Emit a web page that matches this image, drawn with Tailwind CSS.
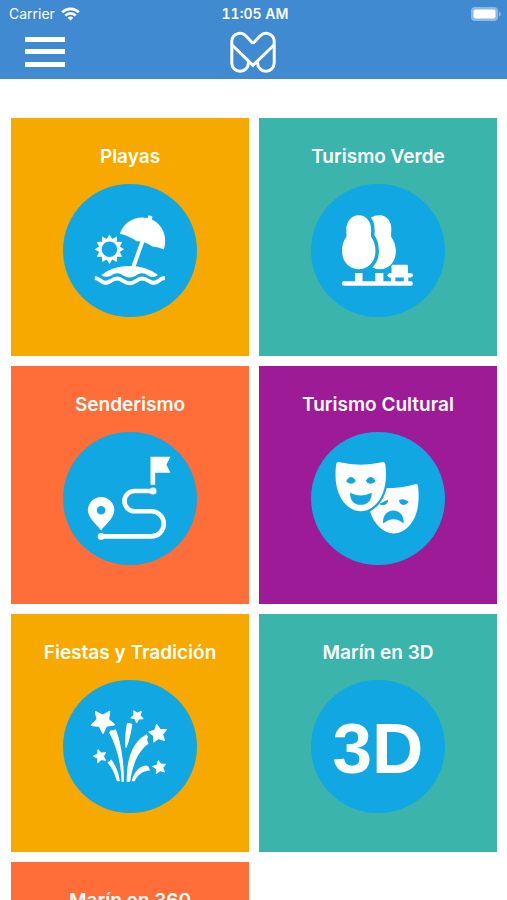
<!DOCTYPE html>
<html lang="es">
<head>
<meta charset="utf-8">
<meta name="viewport" content="width=device-width, initial-scale=1">
<title>Marín Turismo</title>
<script src="https://cdn.jsdelivr.net/npm/@tailwindcss/browser@4"></script>
</head>
<body class="flex h-screen flex-col overflow-hidden bg-white font-['Inter','Liberation_Sans',sans-serif] text-white">

<header class="shrink-0 bg-[#3f8ad0] pb-1.5">
  <div class="grid h-7 grid-cols-3 items-center pr-1.5 pl-[9px] text-sm leading-5">
    <div class="flex items-center gap-1.5">
      <span>Carrier</span>
      <svg class="h-3.5 w-[19px]" viewBox="0 0 19 14" fill="none" stroke="#fff" stroke-width="2.7" aria-label="Wi-Fi">
        <path d="M1.2 5.2A11.8 11.8 0 0 1 17.8 5.2"/>
        <path d="M4.3 8.6A7.4 7.4 0 0 1 14.7 8.6"/>
        <path d="M9.5 13.6L6.8 10.9A3.8 3.8 0 0 1 12.2 10.9Z" fill="#fff" stroke="none"/>
      </svg>
    </div>
    <span class="text-center font-semibold tabular-nums">11:05 AM</span>
    <svg class="h-3.5 w-[30px] justify-self-end" viewBox="0 0 30 14" aria-label="Batería">
      <rect x="0" y="0" width="27" height="14" rx="4" fill="#fff" opacity=".4"/>
      <rect x="2.5" y="2.5" width="22" height="9" rx="2" fill="#fff"/>
      <path d="M28 4.5Q30 5.5 30 7T28 9.5Z" fill="#fff" opacity=".4"/>
    </svg>
  </div>
  <div class="grid h-[45px] grid-cols-3 items-center px-[25px]">
    <button type="button" aria-label="Menú" class="mt-0.5 flex h-8 w-10 flex-col justify-between py-px">
      <span class="h-[5px] w-full bg-white"></span>
      <span class="h-[5px] w-full bg-white"></span>
      <span class="h-[5px] w-full bg-white"></span>
    </button>
    <svg class="mt-0.5 h-[42px] w-[46px] justify-self-center" viewBox="0 0 46 42" fill="none" stroke="#fff" stroke-width="3" aria-label="Marín">
      <path d="M23 12.5L15.8 4.8A8.2 8.2 0 0 0 1.8 10V32A8.3 8.3 0 0 0 18.4 32V30.5M23 12.5L30.2 4.8A8.2 8.2 0 0 1 44.2 10V32A8.3 8.3 0 0 1 27.6 32V30.5"/>
      <path d="M2 14L23 34.3L44 14"/>
    </svg>
  </div>
</header>

<main class="min-h-0 flex-1 overflow-y-auto pt-[39px] pr-2.5 pb-2.5 pl-[11px] [scrollbar-width:none]">
  <nav class="grid grid-cols-2 gap-2.5 text-center text-[19px] leading-6 font-semibold">

    <a href="#playas" class="flex aspect-square flex-col items-center gap-[15px] bg-[#f7a900] pt-[27px]">
      <span>Playas</span>
      <svg class="w-[56%] rounded-full bg-[#10a7e2]" viewBox="0 0 134 134" fill="#fff" aria-hidden="true">
        <defs><path id="ray" d="M-2.8 -10.3L0 -14.8L2.8 -10.3Z"/></defs>
        <g transform="translate(46.7 65.7)">
          <circle r="9.3" fill="none" stroke="#fff" stroke-width="3"/>
          <use href="#ray"/><use href="#ray" transform="rotate(30)"/><use href="#ray" transform="rotate(60)"/><use href="#ray" transform="rotate(90)"/><use href="#ray" transform="rotate(120)"/><use href="#ray" transform="rotate(150)"/><use href="#ray" transform="rotate(180)"/><use href="#ray" transform="rotate(210)"/><use href="#ray" transform="rotate(240)"/><use href="#ray" transform="rotate(270)"/><use href="#ray" transform="rotate(300)"/><use href="#ray" transform="rotate(330)"/>
        </g>
        <path d="M57.3 50C60.500 39 72 31.500 85 34.200L86 31.400L90 32.600L89.400 35.800C100 41 105.500 53 101.400 65.800Q95.500 62.800 90.500 63Q81 57.200 74 57.500Q66.500 52.200 57.300 50Z"/>
        <path d="M80.500 56L70.500 84" stroke="#fff" stroke-width="4"/>
        <path d="M38.500 91.500Q50 82.500 67 82.500T95.500 91.500Q91 95.500 85.500 92Q79 87.500 73.500 92Q67 96 60.500 92Q54.500 87.500 48.500 92Q43 95 38.500 91.500Z"/>
        <path d="M32 94.500Q35 94.700 37.500 97Q42.500 101.500 48 97.500Q54.500 92.500 60.500 97.500Q67 102 73.500 97.500Q79.500 92.500 86 97.500Q91.500 101.500 96.500 97Q99 94.700 102.500 94.500" fill="none" stroke="#fff" stroke-width="4"/>
      </svg>
    </a>

    <a href="#turismo-verde" class="flex aspect-square flex-col items-center gap-[15px] bg-[#3bb5ac] pt-[27px]">
      <span>Turismo Verde</span>
      <svg class="w-[56%] rounded-full bg-[#10a7e2]" viewBox="0 0 134 134" fill="#fff" aria-hidden="true">
        <path d="M69 31.500C77 31.500 81 38.500 80.800 45.500C80.700 49 80.300 51 80.600 53C83.500 57 85.300 62 85.300 67.500C85.300 78 78.500 85.700 69.500 85.700Q64 85.700 60 83V34Q64 31.500 69 31.500Z"/>
        <path d="M48 31.300C55.500 31.300 60.500 37.500 60.500 46C60.500 49 60 51 60.500 53C63.500 57 64.800 62 64.800 67.500C64.800 78 57.500 85.700 48 85.700S31.200 78 31.200 67.500C31.200 62 32.500 57 35.500 53C36 51 35.500 49 35.500 46C35.500 37.500 40.500 31.300 48 31.300Z" stroke="#10a7e2" stroke-width="7" paint-order="stroke"/>
        <path d="M44.200 89.500H51.800V99H44.200ZM64.700 89.500H72.800V99H64.700Z"/>
        <rect x="31" y="97.800" width="71.500" height="4.400" rx="2.200"/>
        <rect x="81" y="81.300" width="16.500" height="11" rx="1.500"/>
        <rect x="77" y="89.700" width="25.500" height="4.200" rx="2.100"/>
        <path d="M80.300 92H84.800V99H80.300ZM93.300 92H97.800V99H93.300Z"/>
      </svg>
    </a>

    <a href="#senderismo" class="flex aspect-square flex-col items-center gap-[15px] bg-[#ff6d39] pt-[27px]">
      <span>Senderismo</span>
      <svg class="w-[56%] rounded-full bg-[#10a7e2]" viewBox="0 0 134 134" fill="#fff" aria-hidden="true">
        <path d="M88 25H108L104 33L108 41H92.700V53H88Z"/>
        <circle cx="90.500" cy="59.300" r="3.600"/>
        <circle cx="38.300" cy="105" r="3.400"/>
        <path d="M90 59.300H72A10.200 10.200 0 0 0 72 79.700H88.700A12.650 12.650 0 0 1 88.700 105H38.300" fill="none" stroke="#fff" stroke-width="4.700"/>
        <path fill-rule="evenodd" d="M38.300 99C36 95 25 87 25 78.700A13.300 13.300 0 0 1 51.600 78.700C51.600 87 40.600 95 38.300 99ZM38.300 74.400A4.300 4.300 0 1 0 38.300 83A4.300 4.300 0 1 0 38.300 74.400Z"/>
      </svg>
    </a>

    <a href="#turismo-cultural" class="flex aspect-square flex-col items-center gap-[15px] bg-[#9d1b97] pt-[27px]">
      <span>Turismo Cultural</span>
      <svg class="w-[56%] rounded-full bg-[#10a7e2]" viewBox="0 0 134 134" fill="#fff" aria-hidden="true">
        <path d="M70 56.500Q90 57 104.500 52.600Q107.500 51.500 107.800 55C109 70 108 80 102 90C97 98 90 102 83 102C73 102 63 93 59.500 80Z"/>
        <g fill="#10a7e2">
          <path d="M88.500 68.500Q93.500 66 98.300 70.500Q96 73.700 92.500 73.300Q89 73 88.500 68.500ZM69 72L77.500 68Q78 73.700 70 73.500Z"/>
          <path d="M72.500 92C72 84 76.500 79 82.800 79S93.700 84 93.200 92Q83 83.500 72.500 92Z"/>
        </g>
        <path d="M28.500 30.500Q50 35.500 71.500 30.500Q74.500 29.500 74.800 33C76 44 75.500 53 72 62C67 74 58 79.700 50 79.700S33 74 28 62C24.500 53 24 44 25.200 33Q25.500 29.500 28.500 30.500Z" stroke="#10a7e2" stroke-width="4.500" paint-order="stroke"/>
        <g fill="#10a7e2">
          <path d="M35.300 49.500Q40 41.500 44.800 48.800Q43.500 52 40 52Q37 52 35.300 49.500ZM55.200 48.800Q60 41.500 65 49.500Q63 52 60 52Q56.500 52 55.200 48.800Z"/>
          <path d="M39.300 61Q50 66.500 61 61C61.500 68 57 73.200 50 73.200S39 68 39.300 61Z"/>
        </g>
      </svg>
    </a>

    <a href="#fiestas" class="flex aspect-square flex-col items-center gap-[15px] bg-[#f7a900] pt-[27px]">
      <span>Fiestas y Tradición</span>
      <svg class="w-[56%] rounded-full bg-[#10a7e2]" viewBox="0 0 134 134" fill="#fff" aria-hidden="true">
        <defs><path id="star" stroke="#fff" stroke-width="1.400" stroke-linejoin="round" d="M0 -10L2.900 -4L9.500 -3.100L4.700 1.500L5.900 8.100L0 5L-5.900 8.100L-4.700 1.500L-9.500 -3.100L-2.900 -4Z"/></defs>
        <use href="#star" transform="translate(40 41.500) rotate(35) scale(1.180)"/>
        <use href="#star" transform="translate(74.500 36.500) rotate(40) scale(.660)"/>
        <use href="#star" transform="translate(95.500 54) rotate(-8) scale(.930)"/>
        <use href="#star" transform="translate(37.300 76.700) rotate(-17) scale(.680)"/>
        <use href="#star" transform="translate(97 87.800) rotate(-10) scale(.680)"/>
        <path d="M46.200 52.500L48 50.500L51 50.500L53 49.300C58 62 61.500 82 61.300 102.300H58.800C58.500 82 53 65 46.200 52.500Z"/>
        <path d="M64.300 43.500L67 43L69.700 44.500C68.500 52 67 61 63.800 68H62.800C62 60 62.800 51 64.300 43.500Z"/>
        <path d="M78 58.500L84 54.500L85.500 57L84.500 60L86 64C76 71 70 84 67.500 102.300H64C64 82 68 68 78 58.500Z"/>
        <path d="M44.500 82.700L47 81.500L48.500 79.800C53 86 56 93 57.200 101.700H54.300C52 94 49 87.500 44.500 82.700Z"/>
        <path d="M83.500 86L86 87L87.500 91C80 91.500 75.500 95 72 101.800H69C71.500 92.500 76 87 83.500 86Z"/>
      </svg>
    </a>

    <a href="#marin-3d" class="flex aspect-square flex-col items-center gap-[15px] bg-[#3bb5ac] pt-[27px]">
      <span>Marín en 3D</span>
      <span class="flex aspect-square w-[56%] items-center justify-center rounded-full bg-[#10a7e2] pt-1 font-['Liberation_Sans',sans-serif] text-[71px] leading-none font-bold" aria-hidden="true">3D</span>
    </a>

    <a href="#marin-360" class="flex aspect-square flex-col items-center gap-[15px] bg-[#ff6d39] pt-[27px]">
      <span>Marín en 360</span>
      <span class="aspect-square w-[56%] rounded-full bg-[#10a7e2]" aria-hidden="true"></span>
    </a>
  </nav>
</main>
</body>
</html>
